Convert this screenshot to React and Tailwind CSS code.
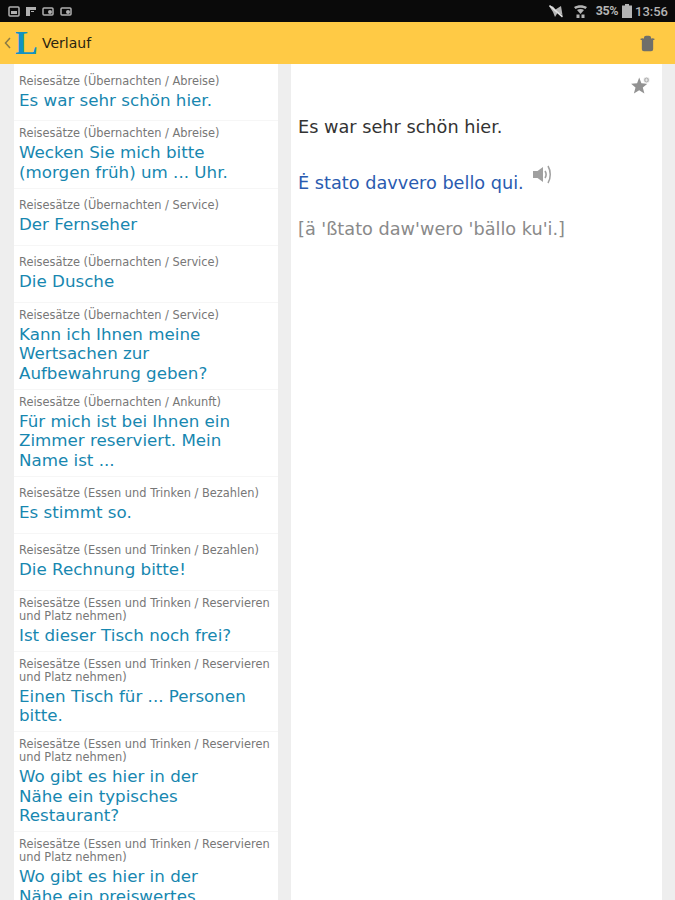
import { Trash2 } from "lucide-react";

const rows = [
  { label: "Reisesätze (Übernachten / Abreise)", title: "Es war sehr schön hier." },
  { label: "Reisesätze (Übernachten / Abreise)", title: <>Wecken Sie mich bitte<br />(morgen früh) um ... Uhr.</> },
  { label: "Reisesätze (Übernachten / Service)", title: "Der Fernseher" },
  { label: "Reisesätze (Übernachten / Service)", title: "Die Dusche" },
  { label: "Reisesätze (Übernachten / Service)", title: <>Kann ich Ihnen meine<br />Wertsachen zur<br />Aufbewahrung geben?</> },
  { label: "Reisesätze (Übernachten / Ankunft)", title: <>Für mich ist bei Ihnen ein<br />Zimmer reserviert. Mein<br />Name ist ...</> },
  { label: "Reisesätze (Essen und Trinken / Bezahlen)", title: "Es stimmt so." },
  { label: "Reisesätze (Essen und Trinken / Bezahlen)", title: "Die Rechnung bitte!" },
  { label: <>Reisesätze (Essen und Trinken / Reservieren<br />und Platz nehmen)</>, title: "Ist dieser Tisch noch frei?" },
  { label: <>Reisesätze (Essen und Trinken / Reservieren<br />und Platz nehmen)</>, title: <>Einen Tisch für ... Personen<br />bitte.</> },
  { label: <>Reisesätze (Essen und Trinken / Reservieren<br />und Platz nehmen)</>, title: <>Wo gibt es hier in der<br />Nähe ein typisches<br />Restaurant?</> },
  { label: <>Reisesätze (Essen und Trinken / Reservieren<br />und Platz nehmen)</>, title: <>Wo gibt es hier in der<br />Nähe ein preiswertes<br />Restaurant?</> },
];

function StatusLeft() {
  return (
    <div className="flex items-center gap-[5px] text-[#b0b0b0]">
      <svg width="12" height="11" viewBox="0 0 12 11" fill="none" stroke="currentColor" strokeWidth="1.5">
        <rect x="1" y="1" width="10" height="9" rx="1" />
        <rect x="3" y="5" width="6" height="3" fill="currentColor" stroke="none" />
      </svg>
      <svg width="12" height="11" viewBox="0 0 12 11" fill="currentColor">
        <path d="M1 1h10v3H5v6H1z" />
        <path d="M6 5h3v1H6z" />
      </svg>
      <svg width="13" height="11" viewBox="0 0 13 11" fill="none" stroke="currentColor" strokeWidth="1.5">
        <rect x="1" y="2" width="10" height="7" rx="1" />
        <circle cx="8" cy="6" r="2" fill="currentColor" stroke="none" />
      </svg>
      <svg width="13" height="11" viewBox="0 0 13 11" fill="none" stroke="currentColor" strokeWidth="1.5">
        <rect x="1" y="2" width="10" height="7" rx="1" />
        <circle cx="8" cy="6" r="2" fill="currentColor" stroke="none" />
      </svg>
    </div>
  );
}

function StatusRight() {
  return (
    <div className="flex items-center text-[#b4b4b4]">
      <svg width="15" height="13" viewBox="0 0 15 13" fill="currentColor" className="mr-[10px]">
        <path d="M0 1l4 .5 2.500 3L12 1l1.500 9-5-2-2.500 4-2-5z" />
        <path d="M1 0l13 11-1 1.500L0 1z" fill="#e2e2e2" />
      </svg>
      <svg width="13" height="13" viewBox="0 0 13 13" fill="currentColor" className="mr-[9px]">
        <path d="M0 2C4 -.5 9 -.5 13 2l-1.500 2C8.500 2.200 4.500 2.200 1.500 4z" />
        <path d="M3 5c2-1.200 5-1.200 7 0L6.500 9z" />
        <path d="M2.500 9.500h3V13h-3zM7.500 9.500h3V13h-3z" />
      </svg>
      <span className="text-[12.5px] leading-none font-bold tracking-[-0.4px] mr-[4px]">35%</span>
      <svg width="10" height="14" viewBox="0 0 10 14" fill="currentColor" className="mr-[3px]">
        <path d="M3 0h4v1.500h3V14H0V1.500h3z" />
      </svg>
      <span className="text-[13px] leading-none font-medium">13:56</span>
    </div>
  );
}

function StarPlus() {
  return (
    <svg width="20" height="20" viewBox="0 0 20 20" fill="#929292">
      <path d="M8.200 1.500l2.200 5.800 6 .5-4.600 3.700 1.600 6-5.200-3.300-5.300 3.300 1.600-6L.100 7.800l6-.5z" />
      <circle cx="15.500" cy="4" r="3" fill="#b4b4b4" stroke="#fff" strokeWidth=".8" />
      <path d="M14 4h3M15.500 2.500v3" stroke="#eeeeee" strokeWidth=".8" />
    </svg>
  );
}

function Speaker() {
  return (
    <svg width="22" height="21" viewBox="0 0 22 21" fill="none">
      <path d="M1 7h4.500L11 3v15l-5.500-4H1z" fill="#a0a0a0" />
      <path d="M13 7c1.300 2 1.300 5 0 7" stroke="#a0a0a0" strokeWidth="1.600" />
      <path d="M16 2c3 5 3 12 0 17" stroke="#a0a0a0" strokeWidth="1.500" />
    </svg>
  );
}

export default function App() {
  return (
    <div className="h-[900px] w-[675px] overflow-hidden flex flex-col bg-[#eeeeee] font-['DejaVu_Sans',sans-serif]">
      {/* status bar */}
      <div className="h-[22px] shrink-0 bg-[#0a0a0a] flex items-center justify-between pl-[8px] pr-[7px] font-['Roboto',sans-serif]">
        <StatusLeft />
        <StatusRight />
      </div>

      {/* toolbar */}
      <div className="h-[42px] shrink-0 bg-[#ffca45] flex items-center relative z-10">
        <svg width="7" height="12" viewBox="0 0 7 12" fill="none" stroke="#8a7a45" strokeWidth="1.500" className="ml-[4px]">
          <path d="M6 1L1.500 6 6 11" />
        </svg>
        <span className="ml-[4px] w-[22px] text-center text-[34px] leading-none font-bold text-[#1292c4] font-['Liberation_Serif',serif]">L</span>
        <span className="ml-[5px] text-[14px] text-[#2a2410]">Verlauf</span>
        <Trash2 size={17} fill="#6f6f6a" stroke="#6f6f6a" className="ml-auto mr-[19px]" />
      </div>

      <div className="flex-1 min-h-0 flex pl-[14px] pr-[13px] gap-[13px]">
        {/* history list */}
        <div className="w-[264px] shrink-0 bg-white overflow-hidden">
          {rows.map((row, i) => (
            <div key={i} className="min-h-[57px] pl-[5px] pt-[6px] pb-[5.5px] flex flex-col justify-center border-b border-[#f6f6f6]">
              <div className="mb-[3px] text-[11.4px] leading-[13px] text-[#777777] whitespace-nowrap">{row.label}</div>
              <div className="text-[16.7px] leading-[19.5px] text-[#1787b0] whitespace-nowrap">{row.title}</div>
            </div>
          ))}
        </div>

        {/* detail */}
        <div className="flex-1 min-w-0 bg-white relative pl-[7px] pt-[53px]">
          <div className="absolute top-[12px] right-[11px]">
            <StarPlus />
          </div>
          <p className="text-[17.7px] leading-[20px] text-[#333333]">Es war sehr schön hier.</p>
          <div className="mt-[36px] flex items-start">
            <p className="text-[17.7px] leading-[20px] text-[#2a5bb0]">Ė stato davvero bello qui.</p>
            <span className="ml-[8px] -mt-[9px]"><Speaker /></span>
          </div>
          <p className="mt-[26px] text-[17.7px] leading-[20px] text-[#8a8a8a]">[ä 'ßtato daw'wero 'bällo ku'i.]</p>
        </div>
      </div>
    </div>
  );
}
